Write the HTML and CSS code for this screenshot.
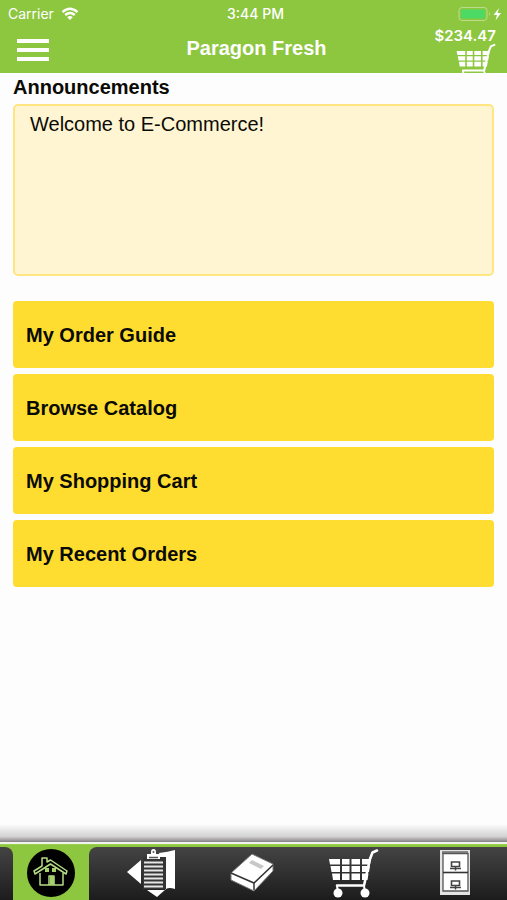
FILE: index.html
```html
<!DOCTYPE html>
<html lang="en">
<head>
<meta charset="utf-8">
<meta name="viewport" content="width=device-width, initial-scale=1">
<title>Paragon Fresh</title>
<link rel="stylesheet" href="styles.css">
</head>
<body>
<header class="top">
  <div class="status">
    <div class="status-left">
      <span>Carrier</span>
      <svg class="wifi" viewBox="0 0 18 14" aria-hidden="true">
        <path d="M1.5 5.2Q9-1.6 16.5 5.2M4.2 8Q9 3.8 13.800 8" fill="none" stroke="#fff" stroke-width="2.4"/>
        <path d="M6.2 10.2Q9 7.8 11.800 10.2L9 13Z" fill="#fff"/>
      </svg>
    </div>
    <span class="clock">3:44 PM</span>
    <div class="status-right">
      <svg class="battery" viewBox="0 0 45 16" aria-hidden="true">
        <rect x="1" y="1.5" width="28" height="13" rx="3" fill="none" stroke="#b9dd8c"/>
        <rect x="3" y="3.5" width="24" height="9" rx="1" fill="#4cd964"/>
        <path d="M31 6q2 2 0 4z" fill="#b9dd8c"/>
        <path d="M41 2L35.5 9H39L37.5 14.5L43 7H39.5Z" fill="#fff"/>
      </svg>
    </div>
  </div>
  <div class="bar">
    <button class="menu" type="button" aria-label="Menu"><span></span><span></span><span></span></button>
    <h1 class="title">Paragon Fresh</h1>
    <a class="total" href="#cart">
      <span>$234.47</span>
      <svg class="total-cart" viewBox="10 1 52 41" preserveAspectRatio="none" aria-hidden="true"><use href="#cart-icon"/></svg>
    </a>
  </div>
</header>

<main class="content">
  <h2 class="heading">Announcements</h2>
  <div class="announcement">Welcome to E-Commerce!</div>
  <div class="actions">
    <button class="action" type="button">My Order Guide</button>
    <button class="action" type="button">Browse Catalog</button>
    <button class="action" type="button">My Shopping Cart</button>
    <button class="action" type="button">My Recent Orders</button>
  </div>
</main>

<nav class="tabs">
  <a class="tab selected" href="#home" aria-label="Home">
    <svg class="icon" viewBox="0 0 76 53" aria-hidden="true">
      <circle cx="38" cy="26" r="24" fill="#000"/>
      <g fill="none" stroke="#b5dc86" stroke-width="1.5" stroke-linejoin="round">
        <path d="M27 26V38H50V26"/>
        <path d="M29 19V11H34V15L37.5 13L54 24L53 27L37.5 17L22 27L21 24Z"/>
        <path d="M36 38V29H41V38"/>
      </g>
      <path d="M32 21h4v4h-4zM39 21h4v4h-4zM37 29h4v9h-4z" fill="#a4d36a"/>
    </svg>
  </a>
  <a class="tab" href="#guide" aria-label="My Order Guide">
    <svg class="icon" viewBox="0 0 76 53" aria-hidden="true">
      <path d="M13 25L27 13V37Z" fill="#fff"/>
      <path d="M45 6Q54 5 61 3V42Q55 40 52 42L43 50L33 43H51V10H46Z" fill="#fff"/>
      <path d="M29 10H52V42H29Z" fill="#343434"/>
      <path d="M30 15.500h19M30 19.500h19M30 23.500h19M30 27.500h19M30 31.500h19M30 35.500h19M30 39.500h19" stroke="#e6e6e6" stroke-width="2"/>
      <path d="M33 12V7H37V5Q37 2 39.5 2T42 5V7H46V12Z" fill="#fff"/>
      <path d="M35 10.5h9" stroke="#555" stroke-width="1.5"/>
      <circle cx="39.5" cy="5" r="1" fill="#555"/>
    </svg>
  </a>
  <a class="tab" href="#catalog" aria-label="Browse Catalog">
    <svg class="icon" viewBox="0 0 76 53" aria-hidden="true">
      <path d="M37 7L58 17V24L39 44L16 33V26Z" fill="#fff" stroke="#777" stroke-width="1"/>
      <path d="M16 26L39 36L58 18M39 36V43" fill="none" stroke="#333" stroke-width="1.5"/>
      <path d="M37 13L49 19L46 22L34 16Z" fill="#c8c8c8"/>
    </svg>
  </a>
  <a class="tab" href="#cart" aria-label="My Shopping Cart">
    <svg class="icon" viewBox="0 0 76 53" aria-hidden="true">
      <g id="cart-icon">
        <path d="M12 12H23V17.500H13ZM25 12H32.500V17.500H25ZM34.500 12H43V17.500H34.500ZM45 12H54L53 17.500H45Z" fill="#fff"/>
        <path d="M13.5 19H23V25H14.500ZM25 19H32.500V25H25ZM34.500 19H43V25H34.500ZM45 19H53L52 25H45Z" fill="#fff"/>
        <path d="M15 26.500H23V33H16ZM25 26.500H32.500V33H25ZM34.500 26.500H43V33H34.500ZM45 26.500H51.500L50.500 33H45Z" fill="#fff"/>
        <path d="M60 3.5L55.500 5.500L53 12L47 38.500H20" fill="none" stroke="#fff" stroke-width="2.6" stroke-linejoin="round" stroke-linecap="round"/>
        <path d="M20 39L21 45M47 39L48 45" stroke="#fff" stroke-width="2"/>
        <circle cx="21" cy="46" r="4.5" fill="#fff"/>
        <circle cx="48" cy="46" r="4.5" fill="#fff"/>
      </g>
    </svg>
  </a>
  <a class="tab" href="#orders" aria-label="My Recent Orders">
    <svg class="icon" viewBox="0 0 76 53" aria-hidden="true">
      <path d="M22 3H52V48H22Z" fill="#e4e4e4"/>
      <path d="M24 4H50V7H24Z" fill="#888"/>
      <path d="M25 6.5H50V44H25Z" fill="#fff" stroke="#555" stroke-width="1.3"/>
      <path d="M25 25.5H50" stroke="#333" stroke-width="1.6"/>
      <g id="drawer-pull" fill="none" stroke="#444">
        <path d="M33.5 15H41.500V19.500H33.5Z" stroke-width="1.6"/>
        <path d="M32 21.5H43M37.5 19V23.5" stroke-width="1.5"/>
      </g>
      <use href="#drawer-pull" y="19"/>
    </svg>
  </a>
</nav>
</body>
</html>
```
FILE: styles.css
```css
* {
  box-sizing: border-box;
}

body {
  margin: 0;
  min-height: 100vh;
  display: flex;
  flex-direction: column;
  background: #fdfdfd;
  color: #0b0b05;
  font-family: "Liberation Sans", Arial, sans-serif;
}

a {
  color: inherit;
  text-decoration: none;
}

svg {
  display: block;
}

.top {
  background: #8dc63f;
  color: #fff;
}

.status {
  display: grid;
  grid-template-columns: 1fr auto 1fr;
  align-items: center;
  height: 28px;
  padding: 0 4px 0 8px;
  font: 14px/20px Inter, sans-serif;
}

.status-left {
  display: flex;
  align-items: center;
  gap: 7px;
}

.status-right {
  display: flex;
  justify-content: flex-end;
}

.wifi {
  width: 18px;
  height: 14px;
}

.clock {
  font-weight: 500;
}

.battery {
  width: 45px;
  height: 16px;
}

.bar {
  display: grid;
  grid-template-columns: 1fr auto 1fr;
  height: 45px;
  padding: 0 11px 0 17px;
}

.menu {
  display: flex;
  flex-direction: column;
  gap: 5px;
  width: 32px;
  margin: 11px 0 0;
  padding: 0;
  border: 0;
  background: none;
}

.menu span {
  width: 32px;
  height: 4px;
  background: #fff;
}

.title {
  margin: 0;
  font-size: 20px;
  line-height: 40px;
}

.total {
  display: flex;
  flex-direction: column;
  align-items: flex-end;
  font: 600 15px/15px Inter, sans-serif;
}

.total-cart {
  width: 41px;
  height: 30px;
}

.content {
  flex: 1;
  padding: 0 13px 24px;
}

.heading {
  margin: 0;
  font-size: 20px;
  line-height: 28px;
}

.announcement {
  min-height: 172px;
  margin-top: 3px;
  padding: 6px 15px;
  border: 2px solid #ffe680;
  border-radius: 5px;
  background: #fff5d3;
  font-size: 20px;
  line-height: 24px;
}

.actions {
  display: flex;
  flex-direction: column;
  gap: 6px;
  margin-top: 25px;
}

.action {
  min-height: 67px;
  padding: 0 13px;
  border: 0;
  border-radius: 4px;
  background: #ffdd30;
  color: inherit;
  font: bold 20px/24px "Liberation Sans", Arial, sans-serif;
  text-align: left;
}

.tabs {
  display: grid;
  grid-template-columns: repeat(5, 1fr);
  border-top: 3px solid #9bd04e;
  background: #8dc63f;
}

.tabs::before {
  content: "";
  grid-column: 1 / -1;
  height: 18px;
  margin-top: -21px;
  margin-bottom: 3px;
  border-bottom: 2px solid #f0f2ec;
  background: linear-gradient(#fdfdfd, #d2d2d2 70%, #857f85);
}

.tab {
  display: flex;
  justify-content: center;
  background: linear-gradient(#444, #1c1c1c);
}

.tab.selected {
  background: #8dc63f;
}

.selected::before,
.selected::after {
  content: "";
  flex: 1;
  background: linear-gradient(#444, #1c1c1c);
}

.selected::before {
  border-top-right-radius: 8px;
}

.selected::after {
  border-top-left-radius: 8px;
}

.icon {
  width: 76px;
  height: 53px;
}
```
